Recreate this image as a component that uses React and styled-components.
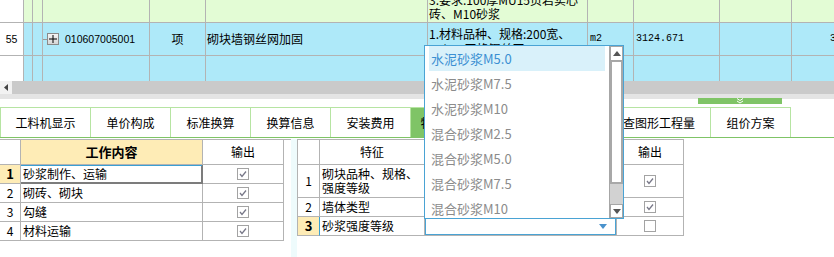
import React from "react"
import styled, { createGlobalStyle } from "styled-components"

const line = "#b3b3b3"
const tabLine = "#b6e4a2"

const GlobalStyle = createGlobalStyle`
  * { box-sizing: border-box; }
  html, body { margin: 0; padding: 0; background: #fff; }
  body {
    font-family: "Noto Sans CJK SC", "Liberation Sans", sans-serif;
    font-size: 12px;
    color: #000;
  }
`

const Page = styled.div`
  position: relative;
  width: 834px;
  height: 257px;
  overflow: hidden;
  background: #fff;
  display: flex;
  flex-direction: column;
`

/* top bill grid */

const GridRow = styled.div`
  display: flex;
  flex: 0 0 ${p => p.h}px;
  height: ${p => p.h}px;
  min-height: 0;
  overflow: hidden;
  border-bottom: ${p => (p.last ? "none" : `1px solid ${line}`)};
  background: ${p => p.bg};
  line-height: 14px;
`

const Cell = styled.div`
  flex: ${p => (p.w ? `0 0 ${p.w}px` : "1 1 auto")};
  border-right: ${p => (p.w ? `1px solid ${line}` : "none")};
  background: ${p => p.bg || "transparent"};
  display: flex;
  align-items: ${p => p.align || "center"};
  justify-content: ${p => (p.center ? "center" : "flex-start")};
  padding-left: ${p => p.pl || 0}px;
  padding-top: ${p => p.pt || 0}px;
  padding-bottom: ${p => p.pb || 0}px;
  overflow: hidden;
  white-space: nowrap;
`

const Digits = styled.span`
  font-family: "Liberation Sans", sans-serif;
  font-size: 10.5px;
`

const Mono = styled.span`
  font-family: "Liberation Mono", monospace;
  font-size: 10px;
`

const TreeLine = styled.span`
  width: 4px;
  height: 1px;
  background: #9a9a9a;
`

const ExpandBox = styled.span`
  width: 12px;
  height: 12px;
  border: 1px solid #8a8a8a;
  background: linear-gradient(#f4f4f4, #d6d6d6);
  display: flex;
  align-items: center;
  justify-content: center;
  margin-right: 6px;
`

const HScroll = styled.div`
  flex: 0 0 13px;
  min-height: 0;
  display: flex;
  background: #cacaca;
`

const ScrollBtn = styled.div`
  width: 12px;
  background: #f2f2f2;
  display: flex;
  align-items: center;
  justify-content: center;
`

const Splitter = styled.div`
  flex: 0 0 13px;
  min-height: 0;
  background: linear-gradient(#e4e4e4 0, #e4e4e4 5px, #fff 5px);
  display: flex;
  justify-content: flex-end;
  padding-right: 52px;
  padding-top: 4px;
`

const Handle = styled.div`
  width: 84px;
  height: 6px;
  background: #7fc466;
  display: flex;
  justify-content: center;
  align-items: center;
`

/* tabs */

const TabBar = styled.div`
  flex: 0 0 31px;
  min-height: 0;
  display: flex;
  border-bottom: 1px solid #7fc466;
`

const Tab = styled.div`
  flex: 0 0 ${p => p.w}px;
  height: 30px;
  border-top: 1px solid ${tabLine};
  border-right: 1px solid ${tabLine};
  border-left: ${p => (p.first ? `1px solid ${tabLine}` : "none")};
  background: ${p => (p.active ? "#7fc466" : "#fff")};
  display: flex;
  align-items: center;
  justify-content: center;
  white-space: nowrap;
  overflow: hidden;
`

/* bottom panels */

const Bottom = styled.div`
  flex: 1 1 auto;
  min-height: 0;
  display: flex;
  padding-top: 1px;
`

const LeftPanel = styled.div`
  flex: 0 0 291px;
`

const Strip = styled.div`
  flex: 0 0 6px;
  background: #eefbfc;
`

const Table = styled.div`
  display: grid;
  grid-template-columns: ${p => p.cols};
  border-top: 1px solid ${line};
  border-left: ${p => (p.bordered ? `1px solid ${line}` : "none")};
  align-self: flex-start;
  line-height: 14px;
`

const TCell = styled.div`
  height: ${p => p.h}px;
  border-right: 1px solid ${p => (p.focus ? "#7c7c7c" : p.mark ? "#3aa0d4" : line)};
  border-bottom: 1px solid ${p => (p.focus ? "#7c7c7c" : line)};
  box-shadow: ${p =>
    p.focus ? "inset 0 1px 0 #3aa0d4, inset -1px -1px 0 #7c7c7c" : "none"};
  background: ${p => p.bg || "#fff"};
  display: flex;
  align-items: center;
  justify-content: ${p => (p.center ? "center" : "flex-start")};
  padding-left: ${p => (p.center ? 0 : 2)}px;
  font-weight: ${p => (p.bold ? 700 : 400)};
  font-size: ${p => (p.bold ? 13 : 12)}px;
`

const Combo = styled.div`
  flex: 1;
  align-self: stretch;
  margin-left: -2px;
  border: 1px solid #4aa3d4;
  display: flex;
  align-items: center;
  justify-content: flex-end;
  padding-right: 8px;
`

/* drop-down list lying over the page */

const DropList = styled.div`
  position: absolute;
  left: 424px;
  top: 45px;
  width: 200px;
  height: 174px;
  border: 1px solid #4aa3d4;
  background: #fff;
  display: flex;
  overflow: hidden;
`

const Items = styled.div`
  flex: 0 0 176px;
  margin-left: 4px;
  display: flex;
  flex-direction: column;
`

const Item = styled.div`
  flex: 0 0 25px;
  display: flex;
  align-items: center;
  padding-left: 2px;
  font-size: 13px;
  color: ${p => (p.active ? "#3b8fd2" : "#8b8b8b")};
  background: ${p => (p.active ? "#d9f1fa" : "transparent")};
`

const VScroll = styled.div`
  flex: 0 0 14px;
  margin-left: 4px;
  display: flex;
  flex-direction: column;
  background: #d2d2d2;
  border-left: 1px solid #a6a6a6;
`

const ArrowBtn = styled.div`
  flex: 0 0 ${p => p.h}px;
  background: #fff;
  border: 1px solid #a6a6a6;
  display: flex;
  align-items: center;
  justify-content: center;
`

const Thumb = styled.div`
  flex: 0 0 123px;
  background: #fff;
  border: 2px solid #a8a8a8;
  border-top-width: 1px;
`

const Check = ({ on }) => (
  <svg width="12" height="12" viewBox="0 0 12 12">
    <rect x="0.5" y="0.5" width="11" height="11" fill="#fff" stroke="#a3a3a3" />
    {on && <polyline points="3,6 5,8.5 9,3.5" fill="none" stroke="#787888" strokeWidth="1.3" />}
  </svg>
)

const Tri = ({ up, color = "#555", w = 8 }) => (
  <svg width={w} height="5" viewBox="0 0 8 5">
    <polygon points={up ? "0,5 8,5 4,0" : "0,0 8,0 4,5"} fill={color} />
  </svg>
)

const widths = [24, 9, 10, 107, 56, 222, 160, 46, 86, 72]
const green = "#e3fcd5"
const blue = "#aee9f9"

const tabs = [
  ["工料机显示", 91],
  ["单价构成", 80],
  ["标准换算", 80],
  ["换算信息", 80],
  ["安装费用", 80],
  ["特征及内容", 80],
  ["工程量明细", 105],
  ["反查图形工程量", 115],
  ["组价方案", 80],
]

const options = [
  "水泥砂浆M5.0",
  "水泥砂浆M7.5",
  "水泥砂浆M10",
  "混合砂浆M2.5",
  "混合砂浆M5.0",
  "混合砂浆M7.5",
  "混合砂浆M10",
]

const work = ["砂浆制作、运输", "砌砖、砌块", "勾缝", "材料运输"]

const App = () => {
  return (
    <Page>
      <GlobalStyle />

      <GridRow h={23} bg={green}>
        <Cell w={widths[0]} bg="#fff" />
        <Cell w={widths[1]} />
        <Cell w={widths[2]} />
        <Cell w={widths[3]} />
        <Cell w={widths[4]} />
        <Cell w={widths[5]} />
        <Cell w={widths[6]} align="flex-end" pl={1} pb={1}>
          <div>
            3.要求:100厚MU15页岩实心
            <br />
            砖、M10砂浆
          </div>
        </Cell>
        <Cell w={widths[7]} />
        <Cell w={widths[8]} />
        <Cell w={widths[9]} />
        <Cell />
      </GridRow>

      <GridRow h={33} bg={blue}>
        <Cell w={widths[0]} bg="#fff" center>
          <Digits>55</Digits>
        </Cell>
        <Cell w={widths[1]} />
        <Cell w={widths[2]} />
        <Cell w={widths[3]}>
          <TreeLine />
          <ExpandBox>
            <svg width="8" height="8" viewBox="0 0 8 8">
              <path d="M0 4h8M4 0v8" stroke="#000" strokeWidth="1" />
            </svg>
          </ExpandBox>
          <Digits>010607005001</Digits>
        </Cell>
        <Cell w={widths[4]} center>
          项
        </Cell>
        <Cell w={widths[5]} pl={1}>
          砌块墙钢丝网加固
        </Cell>
        <Cell w={widths[6]} align="flex-start" pl={1} pt={3}>
          <div style={{ lineHeight: "15px" }}>
            1.材料品种、规格:200宽、
            <br />
            20*20,网格钢丝网
          </div>
        </Cell>
        <Cell w={widths[7]} pl={2}>
          <Mono>m2</Mono>
        </Cell>
        <Cell w={widths[8]} pl={2}>
          <Mono>3124.671</Mono>
        </Cell>
        <Cell w={widths[9]} />
        <Cell pl={38}>
          <Mono>3124.671</Mono>
        </Cell>
      </GridRow>

      <GridRow h={25} bg={blue} last>
        <Cell w={widths[0]} bg="#fff" />
        {widths.slice(1).map((w, i) => (
          <Cell key={i} w={w} />
        ))}
        <Cell />
      </GridRow>

      <HScroll>
        <ScrollBtn>
          <svg width="4" height="7" viewBox="0 0 4 7">
            <polygon points="4,0 4,7 0,3.5" fill="#444" />
          </svg>
        </ScrollBtn>
      </HScroll>

      <Splitter>
        <Handle>
          <svg width="8" height="6" viewBox="0 0 8 6">
            <polyline points="1,0.5 4,2.5 7,0.5" fill="none" stroke="#fff" strokeWidth="1" />
            <polyline points="1,3 4,5 7,3" fill="none" stroke="#fff" strokeWidth="1" />
          </svg>
        </Handle>
      </Splitter>

      <TabBar>
        {tabs.map(([t, w], i) => (
          <Tab key={t} w={w} first={i === 0} active={i === 5}>
            {t}
          </Tab>
        ))}
      </TabBar>

      <Bottom>
        <LeftPanel>
          <Table cols="21px 182px 81px">
            <TCell h={25} />
            <TCell h={25} bg="#feecb6" center bold>
              工作内容
            </TCell>
            <TCell h={25} center>
              输出
            </TCell>
            {work.map((w, i) => (
              <React.Fragment key={w}>
                <TCell h={19} center bg={i === 0 ? "#feecb6" : "#fff"} bold={i === 0}>
                  {i + 1}
                </TCell>
                <TCell h={19} focus={i === 0}>
                  {w}
                </TCell>
                <TCell h={19} center>
                  <Check on />
                </TCell>
              </React.Fragment>
            ))}
          </Table>
        </LeftPanel>

        <Strip />

        <Table cols="22px 105px 192px 67px" bordered>
          <TCell h={25} />
          <TCell h={25} center>
            特征
          </TCell>
          <TCell h={25} center>
            特征值
          </TCell>
          <TCell h={25} center>
            输出
          </TCell>

          <TCell h={33} center>
            1
          </TCell>
          <TCell h={33}>
            <div>
              砌块品种、规格、
              <br />
              强度等级
            </div>
          </TCell>
          <TCell h={33} />
          <TCell h={33} center>
            <Check on />
          </TCell>

          <TCell h={19} center>
            2
          </TCell>
          <TCell h={19}>墙体类型</TCell>
          <TCell h={19} />
          <TCell h={19} center>
            <Check on />
          </TCell>

          <TCell h={19} center bg="#feecb6" bold mark>
            3
          </TCell>
          <TCell h={19}>砂浆强度等级</TCell>
          <TCell h={19}>
            <Combo>
              <Tri color="#4a92cc" />
            </Combo>
          </TCell>
          <TCell h={19} center>
            <Check />
          </TCell>
        </Table>
      </Bottom>

      <DropList>
        <Items>
          {options.map((o, i) => (
            <Item key={o} active={i === 0}>
              {o}
            </Item>
          ))}
        </Items>
        <VScroll>
          <ArrowBtn h={15}>
            <Tri up />
          </ArrowBtn>
          <Thumb />
          <div style={{ flex: 1 }} />
          <ArrowBtn h={14}>
            <Tri />
          </ArrowBtn>
        </VScroll>
      </DropList>
    </Page>
  )
}

export default App
